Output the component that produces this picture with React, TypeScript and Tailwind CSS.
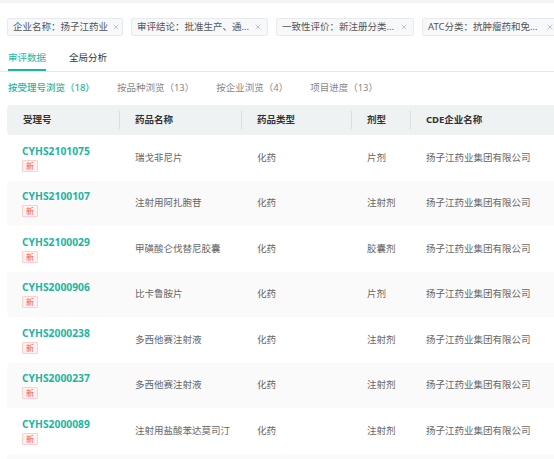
import { X } from 'lucide-react';

const filters = [
  { label: '企业名称：扬子江药业', width: 'w-[116px]' },
  { label: '审评结论：批准生产、通...', width: 'w-[137px]' },
  { label: '一致性评价：新注册分类...', width: 'w-[138px]' },
  { label: 'ATC分类：抗肿瘤药和免...', width: 'w-[138px]' },
];

const subTabs = ['按受理号浏览（18）', '按品种浏览（13）', '按企业浏览（4）', '项目进度（13）'];

const rows = [
  { code: 'CYHS2101075', name: '瑞戈非尼片', type: '化药', form: '片剂' },
  { code: 'CYHS2100107', name: '注射用阿扎胞苷', type: '化药', form: '注射剂' },
  { code: 'CYHS2100029', name: '甲磺酸仑伐替尼胶囊', type: '化药', form: '胶囊剂' },
  { code: 'CYHS2000906', name: '比卡鲁胺片', type: '化药', form: '片剂' },
  { code: 'CYHS2000238', name: '多西他赛注射液', type: '化药', form: '注射剂' },
  { code: 'CYHS2000237', name: '多西他赛注射液', type: '化药', form: '注射剂' },
  { code: 'CYHS2000089', name: '注射用盐酸苯达莫司汀', type: '化药', form: '注射剂' },
];

const font = { fontFamily: '"Noto Sans", "Noto Sans CJK SC", sans-serif' };

export default function App() {
  return (
    <div className="h-[459px] w-[554px] overflow-hidden bg-white" style={font}>
      <div className="h-[3px] bg-[#f4f5f7]" />

      <div className="flex gap-[8px] overflow-hidden pl-[7px] pt-[15px]">
        {filters.map((f) => (
          <div
            key={f.label}
            className={`flex h-[18px] shrink-0 items-center justify-between gap-[4px] overflow-hidden rounded-[2px] border border-[#e8eaed] bg-[#f7f8fa] pl-[5px] pr-[5px] text-[9.5px] text-[#555] ${f.width}`}
          >
            <span className="whitespace-nowrap leading-none">{f.label}</span>
            <X className="h-[8px] w-[8px] shrink-0 text-[#aaa]" strokeWidth={2} />
          </div>
        ))}
      </div>

      <div className="mt-[15px] flex gap-[23px] border-b border-[#e6e8ea] pl-[8px]">
        <div className="border-b-2 border-[#1db5a1] pb-[4px] text-[9.5px] leading-[14px] text-[#1db5a1]">审评数据</div>
        <div className="pb-[4px] text-[9.5px] leading-[14px] text-[#333]">全局分析</div>
      </div>

      <div className="mt-[9px] flex gap-[22px] pl-[8px]">
        {subTabs.map((t, i) => (
          <span
            key={t}
            className={`text-[9.5px] leading-[14px] ${i === 0 ? 'font-medium text-[#1db5a1]' : 'text-[#888]'}`}
          >
            {t}
          </span>
        ))}
      </div>

      <div className="ml-[7px] mt-[10px]">
        <div className="flex h-[30px] items-center rounded-l-[4px] bg-[#eef2f3] text-[9.5px] font-bold text-[#333]">
          <HeadCell className="w-[113px] pl-[16px]" label="受理号" sep />
          <HeadCell className="w-[122px] pl-[15px]" label="药品名称" sep />
          <HeadCell className="w-[110px] pl-[15px]" label="药品类型" sep />
          <HeadCell className="w-[59px] pl-[15px]" label="剂型" sep />
          <HeadCell className="flex-1 pl-[15px]" label="CDE企业名称" />
        </div>

        {rows.map((r, i) => (
          <div
            key={r.code + i}
            className={`flex h-[45.5px] shrink-0 items-center rounded-l-[4px] text-[9.5px] text-[#666] ${i % 2 === 1 ? 'bg-[#fafafa]' : ''}`}
          >
            <div className="flex w-[113px] flex-col items-start pl-[15px]">
              <span className="text-[10.3px] font-bold leading-[14px] text-[#1db5a1]">{r.code}</span>
              <span className="mt-[2px] flex h-[12px] w-[16px] items-center justify-center rounded-[1px] border border-[#ffcfcc] bg-[#fff3f2] text-[8px] leading-none text-[#f5564a]">
                新
              </span>
            </div>
            <div className="w-[122px] pl-[15px]">{r.name}</div>
            <div className="w-[110px] pl-[15px]">{r.type}</div>
            <div className="w-[59px] pl-[15px]">{r.form}</div>
            <div className="flex-1 pl-[15px]">扬子江药业集团有限公司</div>
          </div>
        ))}
        <div className="h-[45.5px] rounded-l-[4px] bg-[#fafafa]" />
      </div>
    </div>
  );
}

function HeadCell({ className, label, sep }: { className: string; label: string; sep?: boolean }) {
  return (
    <div className={`flex h-full items-center justify-between ${className}`}>
      <span>{label}</span>
      {sep && <span className="h-[18px] w-px bg-[#d8dfe1]" />}
    </div>
  );
}
